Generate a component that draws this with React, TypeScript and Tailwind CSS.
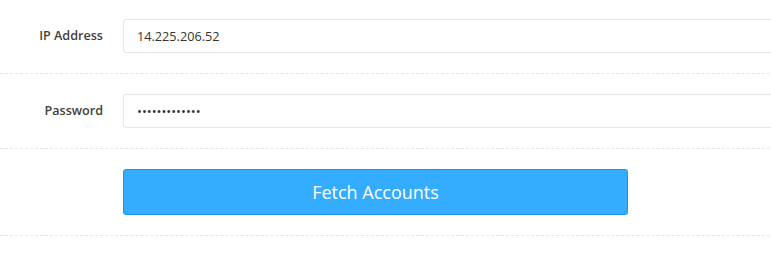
import { useState } from "react";

const App = () => {
  const [ip, setIp] = useState("14.225.206.52");
  const [password, setPassword] = useState("aaaaaaaaaaaaa");

  return (
    <div className="w-[771px] h-[253px] overflow-hidden bg-white font-['Open_Sans',sans-serif]">
      <div className="w-[900px]">
        {/* IP Address */}
        <div className="flex items-center pt-[19px] pb-[20px] border-b border-dashed border-[#e5e5e5]">
          <label className="w-[103px] shrink-0 text-right text-[12.6px] font-semibold text-[#3f3f3f]">
            IP Address
          </label>
          <input
            type="text"
            value={ip}
            onChange={(e) => setIp(e.target.value)}
            className="ml-5 flex-1 h-[34px] px-[13px] text-[12.7px] text-[#333] border border-[#e5e5ea] rounded-[3px] outline-none"
          />
        </div>

        {/* Password */}
        <div className="flex items-center py-5 border-b border-dashed border-[#e5e5e5]">
          <label className="w-[103px] shrink-0 text-right text-[12.6px] font-semibold text-[#3f3f3f]">
            Password
          </label>
          <input
            type="password"
            value={password}
            onChange={(e) => setPassword(e.target.value)}
            className="ml-5 flex-1 h-[34px] px-[13px] text-[13px] text-[#333] border border-[#e5e5ea] rounded-[3px] outline-none"
          />
        </div>

        {/* Submit */}
        <div className="flex py-5 border-b border-dashed border-[#e5e5e5]">
          <div className="w-[103px] shrink-0" />
          <button
            type="button"
            className="ml-5 w-[505px] h-[46px] bg-[#34acff] border border-[#1e94e6] rounded-[3px] text-white text-[18px]"
          >
            Fetch Accounts
          </button>
        </div>
      </div>
    </div>
  );
};

export default App;
